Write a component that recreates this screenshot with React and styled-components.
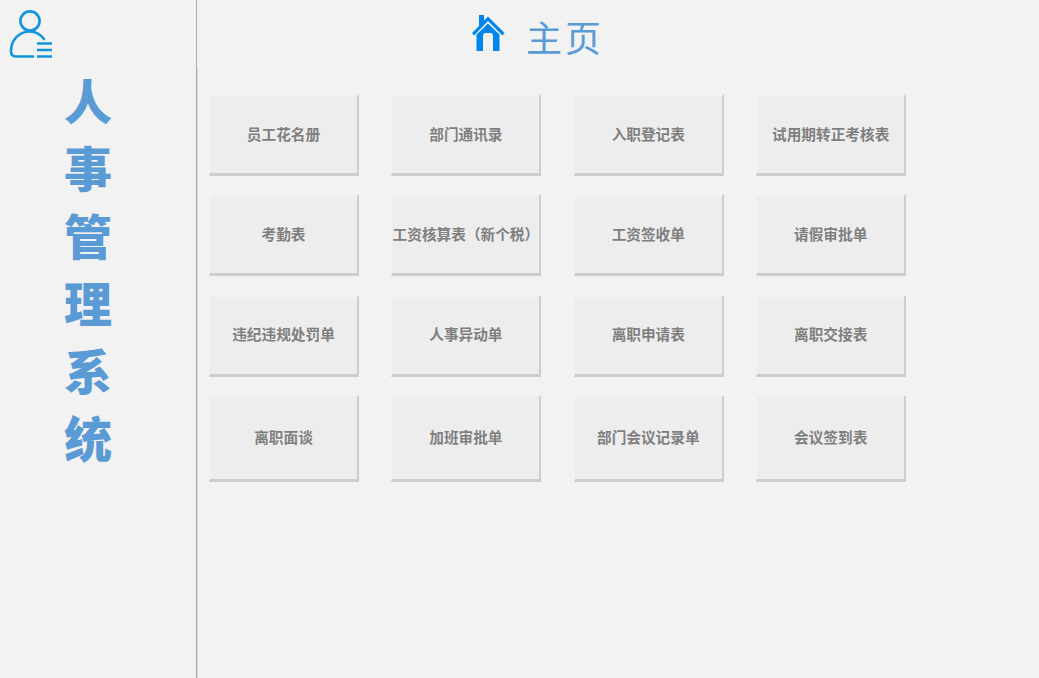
import React from "react";
import styled, { createGlobalStyle } from "styled-components";

const Global = createGlobalStyle`
  html, body { margin: 0; padding: 0; height: 100%; background: #f2f2f2; }
  #root { height: 100%; }
  * { box-sizing: border-box; }
`;

const Page = styled.div`
  display: flex;
  width: 1039px;
  height: 678px;
  overflow: hidden;
  background: #f2f2f2;
  font-family: "Noto Sans CJK SC", "Liberation Sans", sans-serif;
`;

const Sidebar = styled.aside`
  width: 197px;
  flex: none;
  border-right: 1px solid #adadad;
  display: flex;
  flex-direction: column;
`;

const UserSlot = styled.div`
  height: 70px;
  padding: 9px 0 0 9px;
`;

const SystemTitle = styled.div`
  display: flex;
  flex-direction: column;
  align-items: center;
  width: 176px;
  margin-top: -4px;
  font-size: 48px;
  font-weight: 900;
  line-height: 67.4px;
  color: #5b9bd5;
`;

const Main = styled.main`
  flex: 1;
  display: flex;
  flex-direction: column;
`;

const Header = styled.header`
  height: 69px;
  display: flex;
  align-items: flex-start;
  padding: 12px 0 0 275px;
  gap: 21px;
`;

const HomeIconWrap = styled.span`
  display: block;
  margin-top: 3px;
  line-height: 0;
`;

const HeaderTitle = styled.h1`
  margin: 0;
  font-size: 36px;
  font-weight: 400;
  line-height: 48px;
  letter-spacing: 3px;
  color: #5b9bd5;
`;

const Content = styled.div`
  flex: 1;
  border-left: 1px solid #d6d6d6;
  padding: 25px 0 0 11px;
`;

const Grid = styled.div`
  display: grid;
  grid-template-columns: repeat(4, 150px);
  grid-template-rows: 82px 82px 82px 87px;
  column-gap: 32.4px;
  row-gap: 18.3px;
`;

const Tile = styled.button`
  padding: 0 0 2px;
  margin: 0;
  border-style: solid;
  border-width: 2px 2px 3px 1px;
  border-color: #f2f2f2 #cdcdcd #cdcdcd #f2f2f2;
  background: #ededed;
  color: #7f7f7f;
  font-family: inherit;
  font-size: 14.67px;
  font-weight: 700;
  white-space: nowrap;
  line-height: 20px;
`;

const UserIcon = () => (
  <svg width="44" height="50" viewBox="0 0 44 50" fill="none" stroke="#1296db" strokeWidth="2.6" strokeLinecap="round">
    <circle cx="21" cy="12" r="9.6" />
    <path d="M35 30 C31 25 26 22.500 21 22.500 C10 22.500 2 31 2 42 C2 46 4 47.500 7 47.500 H24" />
    <path d="M28 34.500 H43 M28 41 H43 M28 47.500 H43" strokeLinecap="butt" />
  </svg>
);

const HomeIcon = () => (
  <svg width="33" height="37" viewBox="0 0 33 37">
    <path fill="#0086ea" d="M7 0 H12 V5.500 L16 1.500 L32.500 18 L30.500 20.500 L16 6 L2 20.500 L0 18 L7 11 Z" />
    <path fill="#0086ea" d="M16 8.500 L27.500 19.500 V36 H21 V21 C21 19 20 18 18.500 18 H13.500 C12 18 11 19 11 21 V36 H4.500 V19.500 Z" />
  </svg>
);

const titles = [
  "员工花名册", "部门通讯录", "入职登记表", "试用期转正考核表",
  "考勤表", "工资核算表（新个税）", "工资签收单", "请假审批单",
  "违纪违规处罚单", "人事异动单", "离职申请表", "离职交接表",
  "离职面谈", "加班审批单", "部门会议记录单", "会议签到表",
];

export default function App() {
  return (
    <Page>
      <Global />
      <Sidebar>
        <UserSlot><UserIcon /></UserSlot>
        <SystemTitle>
          {"人事管理系统".split("").map((c) => <span key={c}>{c}</span>)}
        </SystemTitle>
      </Sidebar>
      <Main>
        <Header>
          <HomeIconWrap><HomeIcon /></HomeIconWrap>
          <HeaderTitle>主页</HeaderTitle>
        </Header>
        <Content>
          <Grid>
            {titles.map((t) => <Tile key={t}>{t}</Tile>)}
          </Grid>
        </Content>
      </Main>
    </Page>
  );
}
